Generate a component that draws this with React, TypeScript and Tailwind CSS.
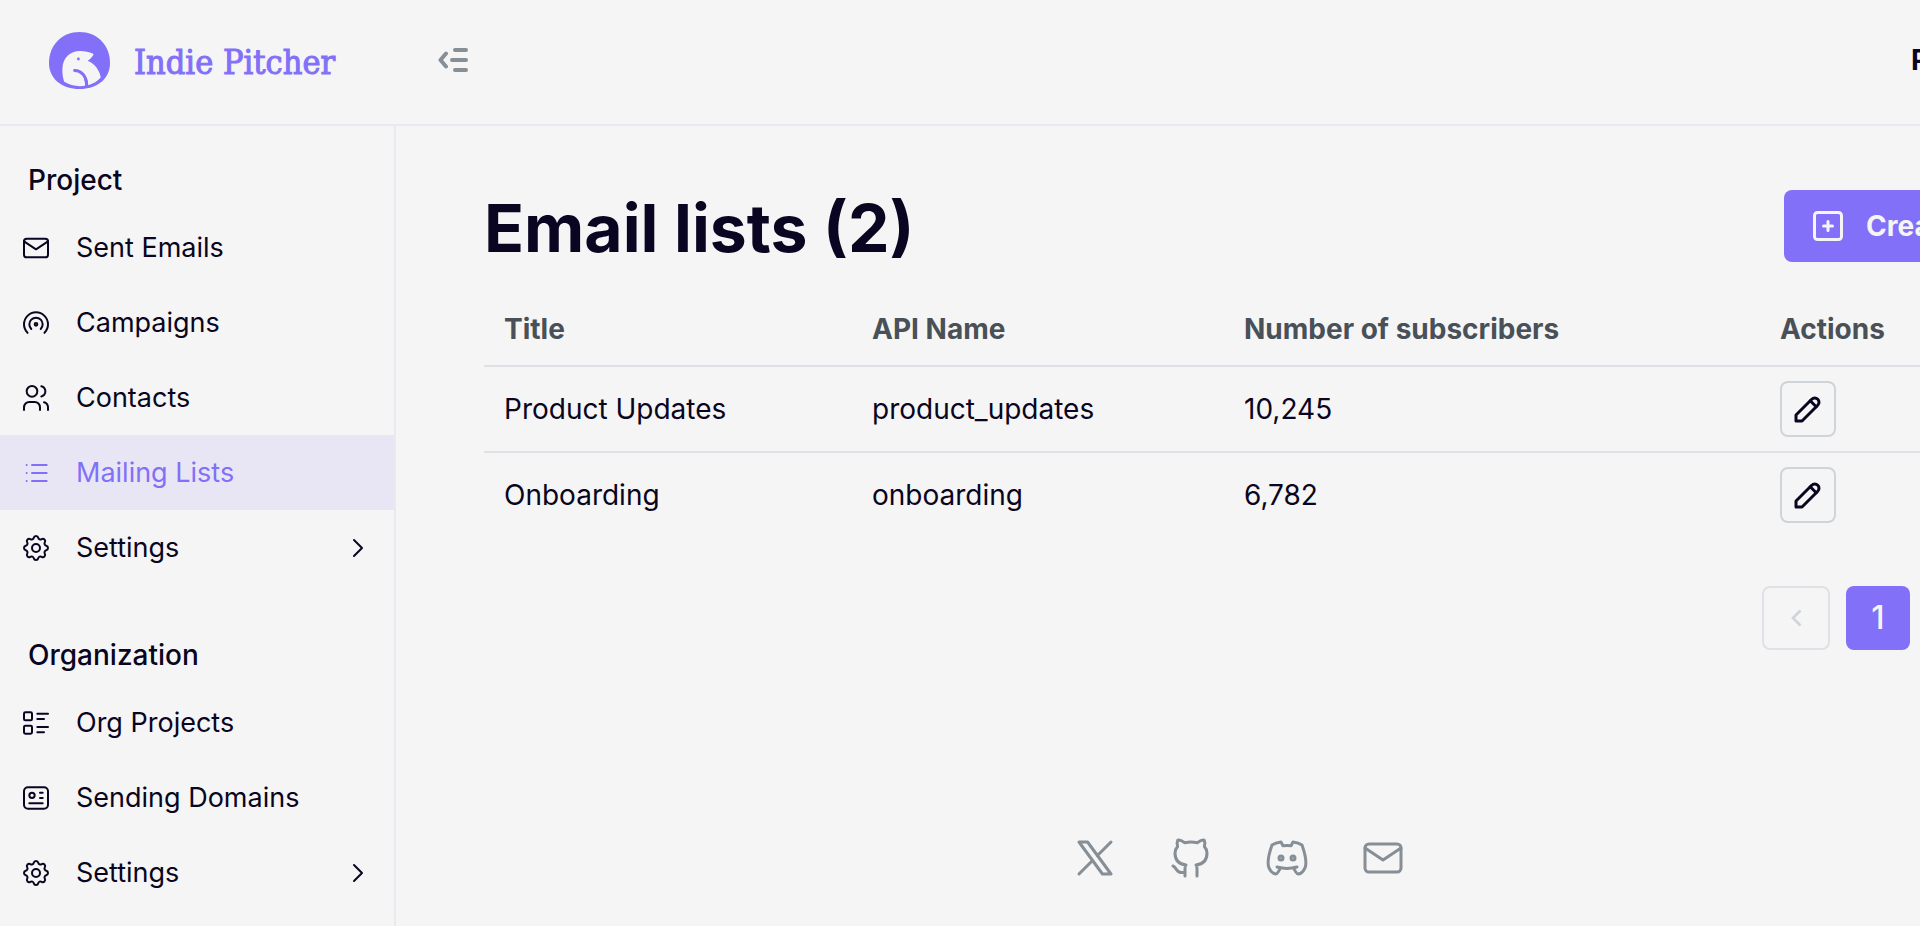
import {
  TbBrandDiscord,
  TbBrandGithub,
  TbBrandX,
  TbBroadcast,
  TbChevronRight,
  TbId,
  TbList,
  TbListDetails,
  TbMail,
  TbPencil,
  TbSettings,
  TbSquarePlus,
  TbUsers,
} from "react-icons/tb";
import type { IconType } from "react-icons";

type NavItem = {
  label: string;
  icon: IconType;
  active?: boolean;
  nested?: boolean;
};

const projectNav: NavItem[] = [
  { label: "Sent Emails", icon: TbMail },
  { label: "Campaigns", icon: TbBroadcast },
  { label: "Contacts", icon: TbUsers },
  { label: "Mailing Lists", icon: TbList, active: true },
  { label: "Settings", icon: TbSettings, nested: true },
];

const organizationNav: NavItem[] = [
  { label: "Org Projects", icon: TbListDetails },
  { label: "Sending Domains", icon: TbId },
  { label: "Settings", icon: TbSettings, nested: true },
];

const lists = [
  { title: "Product Updates", apiName: "product_updates", subscribers: "10,245" },
  { title: "Onboarding", apiName: "onboarding", subscribers: "6,782" },
];

const socials = [
  { label: "X", icon: TbBrandX },
  { label: "GitHub", icon: TbBrandGithub },
  { label: "Discord", icon: TbBrandDiscord },
  { label: "Email", icon: TbMail },
];

function Logo() {
  return (
    <svg viewBox="0 0 61 57" className="w-[61px] h-[57px]" aria-hidden="true">
      <path
        d="M30.5 0C48 0 61 13 61 31C61 47 48 57 30.5 57C13 57 0 47 0 31C0 13 13 0 30.5 0Z"
        fill="#8270f8"
      />
      <path
        d="M15.2 49.8C13.6 45 13.2 41 13.4 36.5C13.8 26 21 19 31 19C36 19 40 20.2 43.6 21.4C44.6 21.8 44.6 22.6 44 23.4C42.6 25.6 40.8 27.4 38.6 28.8C45.6 31.6 50.4 38 51.8 45.6C48.4 49.4 44.4 51.8 39.2 53.2C39 44 33.6 38 25.6 38.2L25.8 38.6C32.6 39.4 36 45 36.2 53.8C28 55 21 53.4 15.2 49.8Z"
        fill="#f5f5f5"
      />
      <path
        d="M25.6 38.4C32.8 38.6 37.6 44.4 37.8 54"
        fill="none"
        stroke="#8270f8"
        strokeWidth="3"
        strokeLinecap="round"
      />
      <circle cx="29.4" cy="27" r="1.4" fill="#8270f8" />
    </svg>
  );
}

function CollapseIcon() {
  return (
    <svg
      viewBox="0 0 30 26"
      className="w-[30px] h-[26px]"
      fill="none"
      stroke="currentColor"
      strokeWidth="4"
      strokeLinecap="round"
      strokeLinejoin="round"
      aria-hidden="true"
    >
      <path d="M17 3H28M14 13H28M17 23H28" />
      <path d="M8 6.5L2.5 13L8 19.5" />
    </svg>
  );
}

function NavSection({ title, items }: { title: string; items: NavItem[] }) {
  return (
    <section>
      <h2 className="px-7 pb-2 text-[28px] leading-[44px] font-medium">{title}</h2>
      <ul>
        {items.map(({ label, icon: Icon, active, nested }) => (
          <li key={label}>
            <a
              href="#"
              className={`flex items-center h-[75px] px-5 ${
                active ? "bg-[#e8e6f5] text-[#8270f8]" : ""
              }`}
            >
              <Icon size={32} strokeWidth={1.5} />
              <span className="flex-1 pl-6 text-[27px] leading-[44px]">{label}</span>
              {nested && <TbChevronRight size={32} strokeWidth={1.5} />}
            </a>
          </li>
        ))}
      </ul>
    </section>
  );
}

function ListsTable() {
  return (
    <table className="w-full table-fixed text-left text-[28px] leading-[44px]">
      <colgroup>
        <col className="w-[368px]" />
        <col className="w-[372px]" />
        <col className="w-[536px]" />
        <col />
      </colgroup>
      <thead>
        <tr className="border-b-2 border-[#dee2e6] text-[#495057]">
          <th className="px-5 py-[14px] font-bold">Title</th>
          <th className="px-5 py-[14px] font-bold">API Name</th>
          <th className="px-5 py-[14px] font-bold">Number of subscribers</th>
          <th className="px-5 py-[14px] font-bold">Actions</th>
        </tr>
      </thead>
      <tbody>
        {lists.map((list) => (
          <tr key={list.apiName} className="border-b-2 border-[#dee2e6] last:border-0">
            <td className="px-5 py-[14px]">{list.title}</td>
            <td className="px-5 py-[14px]">{list.apiName}</td>
            <td className="px-5 py-[14px]">{list.subscribers}</td>
            <td className="px-5 py-[14px]">
              <button
                aria-label={`Edit ${list.title}`}
                className="flex items-center justify-center w-14 h-14 rounded-lg border-2 border-[#ced4da]"
              >
                <TbPencil size={36} />
              </button>
            </td>
          </tr>
        ))}
      </tbody>
    </table>
  );
}

function Pagination() {
  return (
    <nav className="flex justify-end gap-4" aria-label="Pagination">
      <button
        disabled
        aria-label="Previous page"
        className="flex items-center justify-center w-[68px] h-16 rounded-lg border-2 border-[#dee2e6] text-[#ced4da]"
      >
        <svg viewBox="0 0 12 18" className="w-3 h-[18px]" fill="none" stroke="currentColor" strokeWidth="2.6">
          <path d="M10.5 1.5L3 9L10.5 16.5" />
        </svg>
      </button>
      <button className="w-16 h-16 rounded-lg bg-[#8270f8] text-[#f5f5f5] text-[32px] font-medium">1</button>
      <button
        disabled
        aria-label="Next page"
        className="flex items-center justify-center w-[68px] h-16 rounded-lg border-2 border-[#dee2e6] text-[#ced4da]"
      >
        <svg viewBox="0 0 12 18" className="w-3 h-[18px]" fill="none" stroke="currentColor" strokeWidth="2.6">
          <path d="M1.5 1.5L9 9L1.5 16.5" />
        </svg>
      </button>
    </nav>
  );
}

export default function App() {
  return (
    <div className="h-screen overflow-hidden bg-[#f5f5f5] text-[#0a0520] font-[Inter,sans-serif]">
      <div className="flex flex-col h-full min-w-[2082px]">
        <header className="flex items-center h-[126px] shrink-0 pb-1 border-b-2 border-[#e9e9ef]">
          <a href="#" className="flex items-center gap-6 w-[438px] pl-[49px] text-[#8270f8]">
            <Logo />
            <span className="pt-1 text-[34px] leading-[44px] font-[DejaVu_Serif_Condensed,DejaVu_Serif,serif] [-webkit-text-stroke:1px]">
              Indie Pitcher
            </span>
          </a>
          <button aria-label="Collapse sidebar" className="text-[#868e96]">
            <CollapseIcon />
          </button>
          <a href="#" className="ml-auto w-[171px] text-[28px] leading-[44px] font-bold">
            Project
          </a>
        </header>

        <div className="flex flex-1 min-h-0">
          <aside className="flex flex-col gap-12 w-[396px] shrink-0 pt-8 border-r-2 border-[#e9e9ef]">
            <NavSection title="Project" items={projectNav} />
            <NavSection title="Organization" items={organizationNav} />
          </aside>

          <main className="flex flex-col flex-1 px-[88px] pt-16 pb-11">
            <div className="flex items-center justify-between pb-[31px]">
              <h1 className="pt-1 text-[66px] leading-[68px] font-bold">Email lists (2)</h1>
              <button className="flex items-center gap-5 w-[210px] h-[72px] pl-[26px] rounded-lg bg-[#8270f8] text-[#f5f5f5] text-[28px] font-bold">
                <TbSquarePlus size={36} />
                Create
              </button>
            </div>
            <ListsTable />
            <div className="pt-[49px]">
              <Pagination />
            </div>
            <footer className="flex justify-center gap-12 mt-auto text-[#868e96]">
              {socials.map(({ label, icon: Icon }) => (
                <a key={label} href="#" aria-label={label}>
                  <Icon size={48} strokeWidth={1.5} />
                </a>
              ))}
            </footer>
          </main>
        </div>
      </div>
    </div>
  );
}
